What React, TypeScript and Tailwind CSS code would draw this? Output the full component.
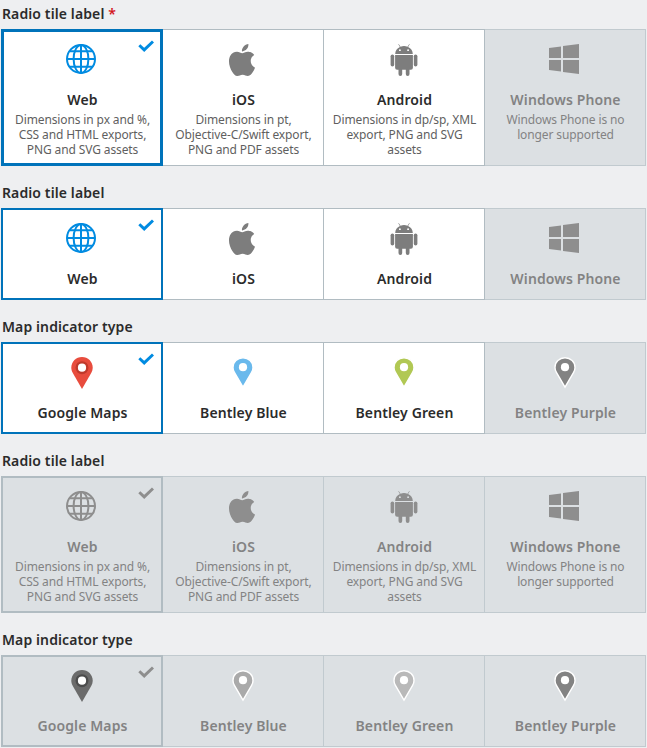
import type { ReactNode } from 'react';
import { SiApple } from 'react-icons/si';

type Tile = { label: string; icon: ReactNode; description?: string; selected?: boolean; disabled?: boolean };
type Group = { label: string; required?: boolean; focused?: boolean; tall?: boolean; tiles: Tile[] };

const Globe = () => (
  <svg className="size-8" viewBox="0 0 32 32" fill="none" stroke="currentColor" strokeWidth="2">
    <circle cx="15" cy="15" r="14" />
    <ellipse cx="15" cy="15" rx="7.4" ry="14" />
    <path d="M15 1v28M1 15h28M3.6 7.2h22.800M3.600 22.800h22.800" />
  </svg>
);

const Android = () => (
  <svg className="size-8" viewBox="0 0 32 32" fill="currentColor">
    <path
      fillRule="evenodd"
      d="M7.200 9.900C7.200 6.900 9 4.400 11.900 3L10.300.3l.4-.3 1.800 2.700a10.500 10.500 0 0 1 7 0L21.300 0l.4.3L20.100 3C23 4.400 24.800 6.900 24.800 9.900ZM11.900 5.200a.95.95 0 1 0 0 1.900.95.95 0 0 0 0-1.900ZM20.100 5.200a.95.95 0 1 0 0 1.900.95.95 0 0 0 0-1.900Z"
    />
    <path d="M7.100 10.900h17.800v12.900a2 2 0 0 1-2 2h-1.400v4.300a1.800 1.800 0 0 1-3.700 0v-4.300h-3.600v4.300a1.800 1.800 0 0 1-3.700 0v-4.300H9.100a2 2 0 0 1-2-2Z" />
    <rect x="2.600" y="10.400" width="3.600" height="12.200" rx="1.800" />
    <rect x="25.800" y="10.400" width="3.600" height="12.200" rx="1.800" />
  </svg>
);

const Windows = () => (
  <svg className="size-8" viewBox="0 0 32 32" fill="currentColor">
    <path d="M0 4.100 12 2.400V14H0ZM14 2.100 30 0v14H14ZM0 16h12v11.600L0 25.900ZM14 16h16v14l-16-2.100Z" />
  </svg>
);

const GooglePin = ({ color, ring }: { color: string; ring: string }) => (
  <svg className="size-8" viewBox="0 0 32 32">
    <path fill={color} d="M16 0C10 0 5.300 4.700 5.300 10.600c0 2.100.6 3.800 1.500 5.500L16 32l9.200-15.900c.9-1.700 1.500-3.400 1.500-5.500C26.700 4.700 22 0 16 0Z" />
    <circle cx="16" cy="10.700" r="6.500" fill={ring} />
    <circle cx="16" cy="10.700" r="4.100" fill="white" />
  </svg>
);

const Pin = ({ color }: { color: string }) => (
  <svg className="size-8" viewBox="0 0 32 32">
    <path
      fill={color}
      stroke="white"
      strokeWidth="1.400"
      d="M16 .8C10.400.8 6 5 6 10.400c0 1.900.5 3.400 1.400 5L16 30l8.600-14.600c.9-1.600 1.400-3.100 1.400-5C26 5 21.600.8 16 .8Z"
    />
    <circle cx="16" cy="10.200" r="4.100" fill="white" />
  </svg>
);

const Apple = () => <SiApple className="mr-0.5 size-8" />;

const platforms = (described: boolean, disabled: boolean): Tile[] => [
  { label: 'Web', icon: <Globe />, selected: true, disabled, description: described ? 'Dimensions in px and %, CSS and HTML exports, PNG and SVG assets' : undefined },
  { label: 'iOS', icon: <Apple />, disabled, description: described ? 'Dimensions in pt, Objective-C/Swift export, PNG and PDF assets' : undefined },
  { label: 'Android', icon: <Android />, disabled, description: described ? 'Dimensions in dp/sp, XML export, PNG and SVG assets' : undefined },
  { label: 'Windows Phone', icon: <Windows />, disabled: true, description: described ? 'Windows Phone is no longer supported' : undefined },
];

const pins = (disabled: boolean): Tile[] => [
  { label: 'Google Maps', icon: <GooglePin color={disabled ? '#6b6b6b' : '#e84c3d'} ring={disabled ? '#4c4c4c' : '#c0392b'} />, selected: true, disabled },
  { label: 'Bentley Blue', icon: <Pin color={disabled ? '#aaaaaa' : '#6ab9ec'} />, disabled },
  { label: 'Bentley Green', icon: <Pin color={disabled ? '#b9b9b9' : '#b1c854'} />, disabled },
  { label: 'Bentley Purple', icon: <Pin color="#838383" />, disabled: true },
];

const groups: Group[] = [
  { label: 'Radio tile label', required: true, focused: true, tall: true, tiles: platforms(true, false) },
  { label: 'Radio tile label', tiles: platforms(false, false) },
  { label: 'Map indicator type', tiles: pins(false) },
  { label: 'Radio tile label', tall: true, tiles: platforms(true, true) },
  { label: 'Map indicator type', tiles: pins(true) },
];

function tileFrame(tile: Tile, focused?: boolean) {
  if (tile.selected && focused) return 'z-20 border-3 border-[#0073ba] pt-3 px-1.5';
  if (tile.selected && tile.disabled) return 'z-20 border-2 border-[#b1bcc2] pt-[13px] px-[7px]';
  if (tile.selected) return 'z-20 border-2 border-[#0073ba] pt-[13px] px-[7px]';
  if (tile.disabled) return 'border border-[#c1cacf] pt-3.5 px-2';
  return 'z-10 border border-[#b1bcc2] pt-3.5 px-2';
}

function TileView({ tile, focused, tall }: { tile: Tile; focused?: boolean; tall?: boolean }) {
  const surface = tile.disabled ? 'bg-[#dce0e3] text-[#838383]' : 'bg-white text-[#2b2b2b]';
  const iconColor = tile.disabled ? 'text-[#8e8e8e]' : tile.selected ? 'text-[#008be1]' : 'text-[#7d7d7d]';
  return (
    <label className={`relative -mr-px flex w-[162px] shrink-0 flex-col items-center text-center ${tall ? 'h-[137px]' : 'h-[92px]'} ${surface} ${tileFrame(tile, focused)}`}>
      <span className={iconColor}>{tile.icon}</span>
      {tile.selected && (
        <svg
          className={`absolute size-4 ${focused ? 'top-1.5 right-1.5' : 'top-[7px] right-[7px]'} ${iconColor}`}
          viewBox="0 0 16 16"
          fill="none"
          stroke="currentColor"
          strokeWidth="2.900"
        >
          <path d="M1.300 7.200 6.200 11.900 15 3.500" />
        </svg>
      )}
      <span className="mt-3.5 -mr-px text-sm leading-5 font-semibold tracking-[0.11px]">{tile.label}</span>
      {tile.description && (
        <span className={`mt-0.5 -mr-px text-xs leading-[15px] tracking-[-0.12px] ${tile.disabled ? 'text-[#838383]' : 'text-[#5f5f5f]'}`}>{tile.description}</span>
      )}
    </label>
  );
}

export default function App() {
  return (
    <main className="flex h-[748px] w-[647px] flex-col gap-[17px] overflow-hidden bg-[#eeeff1] pt-1 pl-px font-['Noto_Sans','Open_Sans',sans-serif] antialiased">
      {groups.map((group, i) => (
        <fieldset key={i}>
          <div className="mb-[5px] pl-px text-sm leading-5 font-semibold tracking-[0.11px] text-[#2b2b2b]">
            {group.label}
            {group.required && <span className="text-[#d3141c]"> *</span>}
          </div>
          <div className="flex">
            {group.tiles.map((tile) => (
              <TileView key={tile.label} tile={tile} focused={group.focused} tall={group.tall} />
            ))}
          </div>
        </fieldset>
      ))}
    </main>
  );
}
